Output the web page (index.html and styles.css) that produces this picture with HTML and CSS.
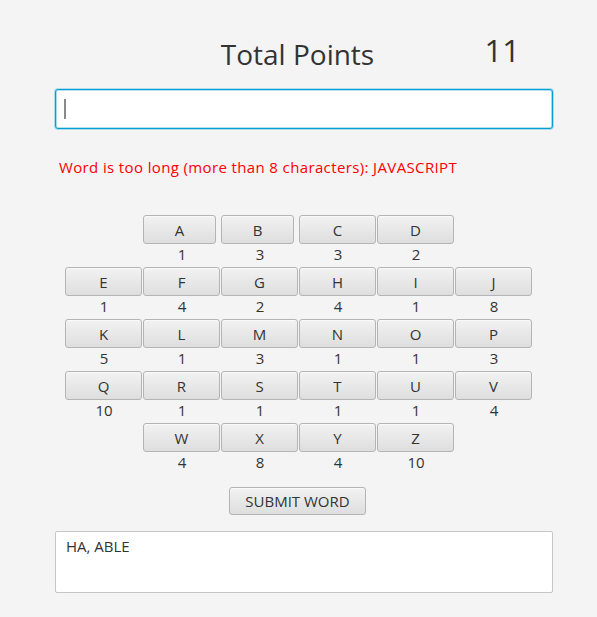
FILE: index.html
```html
<!DOCTYPE html>
<html>
<head>
<meta charset="utf-8">
<link rel="stylesheet" href="styles.css">
</head>
<body>
<div class="app">
  <div class="header">
    <div class="title">Total Points</div>
    <div class="score">11</div>
  </div>
  <div class="main">
    <div class="field"><span class="caret"></span></div>
    <div class="error">Word is too long (more than 8 characters): JAVASCRIPT</div>
    <div class="board">
      <div class="cell c2"><button class="key narrow">A</button><span class="pts">1</span></div>
      <div class="cell"><button class="key narrow">B</button><span class="pts">3</span></div>
      <div class="cell"><button class="key">C</button><span class="pts">3</span></div>
      <div class="cell"><button class="key">D</button><span class="pts">2</span></div>

      <div class="cell c1"><button class="key">E</button><span class="pts">1</span></div>
      <div class="cell"><button class="key">F</button><span class="pts">4</span></div>
      <div class="cell"><button class="key">G</button><span class="pts">2</span></div>
      <div class="cell"><button class="key">H</button><span class="pts">4</span></div>
      <div class="cell"><button class="key">I</button><span class="pts">1</span></div>
      <div class="cell"><button class="key">J</button><span class="pts">8</span></div>

      <div class="cell c1"><button class="key">K</button><span class="pts">5</span></div>
      <div class="cell"><button class="key">L</button><span class="pts">1</span></div>
      <div class="cell"><button class="key">M</button><span class="pts">3</span></div>
      <div class="cell"><button class="key">N</button><span class="pts">1</span></div>
      <div class="cell"><button class="key">O</button><span class="pts">1</span></div>
      <div class="cell"><button class="key">P</button><span class="pts">3</span></div>

      <div class="cell c1"><button class="key">Q</button><span class="pts">10</span></div>
      <div class="cell"><button class="key">R</button><span class="pts">1</span></div>
      <div class="cell"><button class="key">S</button><span class="pts">1</span></div>
      <div class="cell"><button class="key">T</button><span class="pts">1</span></div>
      <div class="cell"><button class="key">U</button><span class="pts">1</span></div>
      <div class="cell"><button class="key">V</button><span class="pts">4</span></div>

      <div class="cell c2"><button class="key">W</button><span class="pts">4</span></div>
      <div class="cell"><button class="key">X</button><span class="pts">8</span></div>
      <div class="cell"><button class="key">Y</button><span class="pts">4</span></div>
      <div class="cell"><button class="key">Z</button><span class="pts">10</span></div>
    </div>
    <div class="submit-row"><button class="submit">SUBMIT WORD</button></div>
    <div class="words">HA, ABLE</div>
  </div>
</div>
</body>
</html>
```

FILE: styles.css
```css
* { box-sizing: border-box; }
html, body {
  margin: 0;
  padding: 0;
  background: #f4f4f4;
}
body {
  font-family: "Open Sans", "Noto Sans", sans-serif;
  color: #333333;
  width: 597px;
  height: 617px;
  overflow: hidden;
}
.app {
  padding-top: 30px;
}
.header {
  display: grid;
  grid-template-columns: 1fr auto 1fr;
  align-items: start;
  height: 44px;
}
.title {
  grid-column: 2;
  font-size: 28px;
  line-height: 40px;
  margin-top: 4px;
  margin-right: 2px;
}
.score {
  grid-column: 3;
  justify-self: end;
  margin-right: 77px;
  font-size: 31px;
  line-height: 40px;
}
.main {
  padding: 15px 44px 0 55px;
}
.field {
  height: 40px;
  background: #ffffff;
  border: 1px solid #039ed3;
  border-radius: 3px;
  box-shadow: 0 0 0 1px rgba(3, 158, 211, 0.28), inset 0 0 0 0.6px rgba(3, 158, 211, 0.6);
  display: flex;
  align-items: center;
  padding-left: 8px;
}
.caret {
  display: block;
  width: 2px;
  height: 20px;
  background: #8a8a8a;
}
.error {
  margin-top: 28px;
  color: #ff0000;
  font-size: 15px;
  line-height: 20px;
  letter-spacing: 0.37px;
  padding-left: 4px;
}
.board {
  margin-top: 38px;
  margin-left: 10px;
  display: grid;
  grid-template-columns: repeat(6, 78px);
}
.cell {
  display: flex;
  flex-direction: column;
  align-items: flex-start;
}
.c1 { grid-column: 1; }
.c2 { grid-column: 2; }
.key {
  width: 77px;
  height: 29px;
  margin: 0;
  padding: 0;
  font-family: "Open Sans", "Noto Sans", sans-serif;
  font-size: 15px;
  color: #333333;
  border: 1px solid #b4b4b4;
  border-radius: 3px;
  background: linear-gradient(#f2f2f2, #dedede);
  box-shadow: inset 0 1px 0 #fafafa;
}
.key.narrow {
  width: 73px;
}
.pts {
  display: block;
  width: 78px;
  height: 23px;
  line-height: 21px;
  text-align: center;
  font-size: 15px;
}
.submit-row {
  margin-top: 12px;
  display: flex;
  justify-content: center;
  padding-right: 13px;
}
.submit {
  width: 137px;
  height: 28px;
  margin: 0;
  padding: 0;
  font-family: "Open Sans", "Noto Sans", sans-serif;
  font-size: 15px;
  color: #333333;
  border: 1px solid #b4b4b4;
  border-radius: 3px;
  background: linear-gradient(#f2f2f2, #dedede);
  box-shadow: inset 0 1px 0 #fafafa;
}
.words {
  margin-top: 16px;
  height: 62px;
  background: #ffffff;
  border: 1px solid #c6c6c6;
  border-radius: 2px;
  padding: 4px 10px;
  font-size: 15px;
  line-height: 20px;
}
```
